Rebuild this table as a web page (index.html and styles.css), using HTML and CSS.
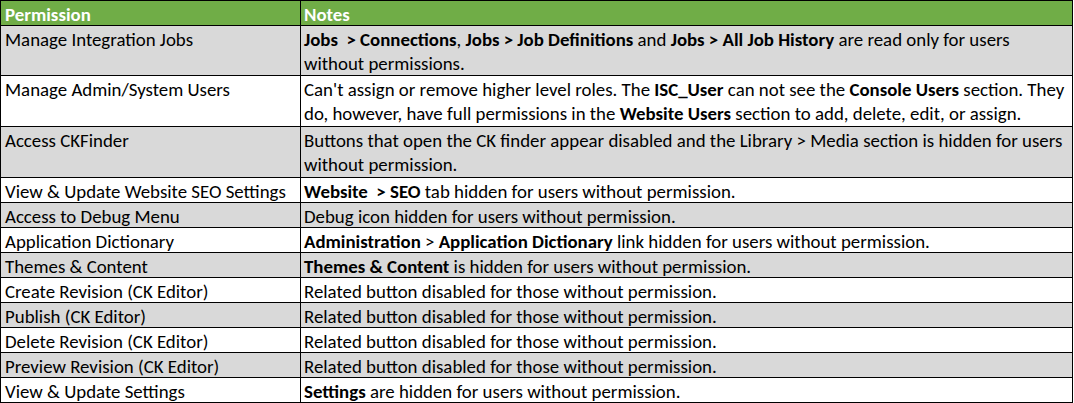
FILE: index.html
```html
<!DOCTYPE html>
<html lang="en">
<head>
<meta charset="utf-8">
<title>Permissions</title>
<link rel="stylesheet" href="styles.css">
</head>
<body>
<div class="sheet">
  <div class="cell head">Permission</div>
  <div class="cell head note">Notes</div>

  <div class="cell gray">Manage Integration Jobs</div>
  <div class="cell gray note"><b>Jobs&nbsp; &gt; Connections</b>, <b>Jobs &gt; Job Definitions</b> and <b>Jobs &gt; All Job History</b> are read only for users<br>without permissions.</div>

  <div class="cell">Manage Admin/System Users</div>
  <div class="cell note">Can't assign or remove higher level roles. The <b>ISC_User</b> can not see the <b>Console Users</b> section. They<br>do, however, have full permissions in the <b>Website Users</b> section to add, delete, edit, or assign.</div>

  <div class="cell gray">Access CKFinder</div>
  <div class="cell gray note">Buttons that open the CK finder appear disabled and the Library &gt; Media section is hidden for users<br>without permission.</div>

  <div class="cell">View &amp; Update Website SEO Settings</div>
  <div class="cell note"><b>Website&nbsp; &gt; SEO</b> tab hidden for users without permission.</div>

  <div class="cell gray">Access to Debug Menu</div>
  <div class="cell gray note">Debug icon hidden for users without permission.</div>

  <div class="cell">Application Dictionary</div>
  <div class="cell note"><b>Administration</b> &gt; <b>Application Dictionary</b> link hidden for users without permission.</div>

  <div class="cell gray">Themes &amp; Content</div>
  <div class="cell gray note"><b>Themes &amp; Content</b> is hidden for users without permission.</div>

  <div class="cell">Create Revision (CK Editor)</div>
  <div class="cell note">Related button disabled for those without permission.</div>

  <div class="cell gray">Publish (CK Editor)</div>
  <div class="cell gray note">Related button disabled for those without permission.</div>

  <div class="cell">Delete Revision (CK Editor)</div>
  <div class="cell note">Related button disabled for those without permission.</div>

  <div class="cell gray">Preview Revision (CK Editor)</div>
  <div class="cell gray note">Related button disabled for those without permission.</div>

  <div class="cell">View &amp; Update Settings</div>
  <div class="cell note"><b>Settings</b> are hidden for users without permission.</div>
</div>
</body>
</html>
```
FILE: styles.css
```css
html, body {
  margin: 0;
  padding: 0;
  background: #ffffff;
}

.sheet {
  display: grid;
  grid-template-columns: 299px 771px;
  grid-template-rows: 24px 49px 50px 50px repeat(9, 24px);
  gap: 1px;
  padding: 1px;
  width: max-content;
  background: #000000;
  font-family: Carlito, Calibri, "Liberation Sans", sans-serif;
  font-size: 18.85px;
  line-height: 24px;
  color: #000000;
}

.cell {
  background: #ffffff;
  padding: 2px 0 0 4px;
  white-space: nowrap;
  overflow: hidden;
}

.cell.note {
  padding-left: 3px;
}

.cell.gray {
  background: #d9d9d9;
}

.cell.head {
  background: #70ad47;
  color: #ffffff;
  font-weight: bold;
}

.cell b {
  font-weight: bold;
}
```
